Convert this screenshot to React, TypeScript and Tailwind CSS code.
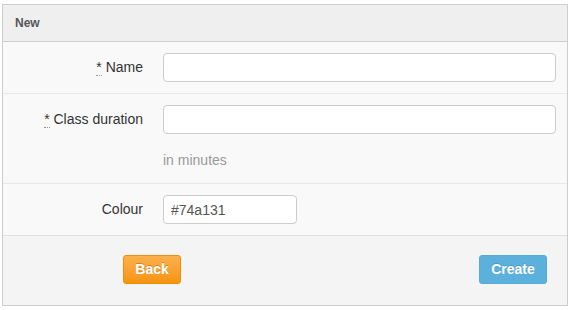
import { useState } from "react";

function Req() {
  return (
    <abbr
      title="required"
      className="no-underline border-b border-dotted border-[#999] cursor-help"
    >
      *
    </abbr>
  );
}

export default function App() {
  const [name, setName] = useState("");
  const [duration, setDuration] = useState("");
  const [colour, setColour] = useState("#74a131");

  return (
    <div
      className="pl-[2px] pt-[4px] w-[572px] h-[310px] bg-white"
      style={{ fontFamily: '"Liberation Sans", Arial, sans-serif' }}
    >
      <div className="w-[566px] border border-[#cdcdcd] bg-[#f9f9f9]">
        <div className="h-[37px] bg-[#efefef] border-b border-[#cdcdcd] pl-[12px] flex items-center">
          <h3 className="text-[12px] font-bold text-[#555]">New</h3>
        </div>

        <div className="flex pt-[11px] pb-[11px] border-b border-[#e8e8e8]">
          <label className="w-[140px] text-right text-[14px] text-[#333] leading-[29px]">
            <Req /> Name
          </label>
          <div className="flex-1 pl-[20px] pr-[11px]">
            <input
              value={name}
              onChange={(e) => setName(e.target.value)}
              className="w-full h-[29px] bg-white border border-[#ccc] rounded-[4px] px-[8px] text-[14px] text-[#555] outline-none"
            />
          </div>
        </div>

        <div className="flex pt-[11px] pb-[13px] border-b border-[#e8e8e8]">
          <label className="w-[140px] text-right text-[14px] text-[#333] leading-[29px]">
            <Req /> Class duration
          </label>
          <div className="flex-1 pl-[20px] pr-[11px]">
            <input
              value={duration}
              onChange={(e) => setDuration(e.target.value)}
              className="w-full h-[29px] bg-white border border-[#ccc] rounded-[4px] px-[8px] text-[14px] text-[#555] outline-none"
            />
            <p className="mt-[16px] text-[14px] leading-[20px] text-[#999]">
              in minutes
            </p>
          </div>
        </div>

        <div className="flex pt-[11px] pb-[11px] border-b border-[#e0e0e0]">
          <label className="w-[140px] text-right text-[14px] text-[#333] leading-[29px]">
            Colour
          </label>
          <div className="flex-1 pl-[20px] pr-[11px]">
            <input
              value={colour}
              onChange={(e) => setColour(e.target.value)}
              className="w-[134px] h-[29px] bg-white border border-[#ccc] rounded-[4px] px-[7px] text-[14px] text-[#555] outline-none"
            />
          </div>
        </div>

        <div className="bg-[#f4f4f4] flex justify-between pl-[120px] pr-[20px] pt-[19px] pb-[21px]">
          <button className="w-[58px] h-[29px] rounded-[3px] border border-[#e8900a] bg-gradient-to-b from-[#fbb04a] to-[#f79409] text-white text-[14px] font-bold [text-shadow:0_-1px_0_rgba(0,0,0,0.2)]">
            Back
          </button>
          <button className="w-[68px] h-[29px] rounded-[3px] border border-[#55acd6] bg-[#5bb1db] text-white text-[14px] font-bold [text-shadow:0_-1px_0_rgba(0,0,0,0.15)]">
            Create
          </button>
        </div>
      </div>
    </div>
  );
}
